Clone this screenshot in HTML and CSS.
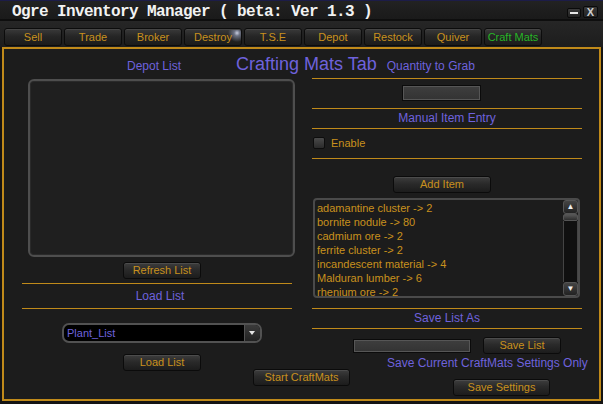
FILE: index.html
```html
<!DOCTYPE html>
<html lang="en">
<head>
  <meta charset="UTF-8" />
  <title>Ogre Inventory Manager</title>
  <link rel="stylesheet" href="styles.css">
</head>
<body>

  <div class="window">
    <div class="titlebar">
      <span class="title">Ogre Inventory Manager ( beta: Ver 1.3 )</span>
      <div class="winbtns">
        <span class="wbtn min"><i></i></span>
        <span class="wbtn close">X</span>
      </div>
    </div>

    <div class="tabs">
      <span class="tab">Sell</span>
      <span class="tab">Trade</span>
      <span class="tab">Broker</span>
      <span class="tab hover">Destroy</span>
      <span class="tab">T.S.E</span>
      <span class="tab">Depot</span>
      <span class="tab">Restock</span>
      <span class="tab">Quiver</span>
      <span class="tab active">Craft Mats</span>
    </div>

    <div class="panel">
      <div class="head">
        <span class="label depot-label">Depot List</span>
        <span class="big-title">Crafting Mats Tab</span>
        <span class="label qty-label">Quantity to Grab</span>
      </div>

      <div class="cols">
        <div class="col">
          <div class="listbox"></div>
          <button class="btn refresh">Refresh List</button>
          <div class="rule"></div>
          <div class="label section">Load List</div>
          <div class="rule"></div>
          <div class="dropdown">
            <span class="dd-text">Plant_List</span>
            <span class="dd-arrow"></span>
          </div>
          <button class="btn load">Load List</button>
          <button class="btn start">Start CraftMats</button>
        </div>

        <div class="col">
          <div class="rule first"></div>
          <div class="field qty"></div>
          <div class="rule"></div>
          <div class="label section">Manual Item Entry</div>
          <div class="rule"></div>
          <label class="check-row"><span class="checkbox"></span>Enable</label>
          <div class="rule"></div>
          <button class="btn add">Add Item</button>
          <div class="itemlist">
            <div class="items">
              <div>adamantine cluster -&gt; 2</div>
              <div>bornite nodule -&gt; 80</div>
              <div>cadmium ore -&gt; 2</div>
              <div>ferrite cluster -&gt; 2</div>
              <div>incandescent material -&gt; 4</div>
              <div>Malduran lumber -&gt; 6</div>
              <div>rhenium ore -&gt; 2</div>
            </div>
            <div class="scrollbar">
              <span class="sb-btn">&#9650;</span>
              <span class="sb-thumb"></span>
              <span class="sb-track"></span>
              <span class="sb-btn">&#9660;</span>
            </div>
          </div>
          <div class="rule gap"></div>
          <div class="label section">Save List As</div>
          <div class="rule"></div>
          <div class="save-row">
            <div class="field savename"></div>
            <button class="btn savelist">Save List</button>
          </div>
          <div class="label save-note">Save Current CraftMats Settings Only</div>
          <button class="btn savesettings">Save Settings</button>
        </div>
      </div>
    </div>
  </div>

</body>
</html>
```

FILE: styles.css
```css
body {
  margin: 0;
  background-color: #000;
  font-family: 'Liberation Sans', Arial, sans-serif;
}

.window {
  width: 603px;
  height: 404px;
  background-color: #141414;
  border-top: 1px solid #1c1c48;
  box-sizing: border-box;
  overflow: hidden;
}

/* title bar */
.titlebar {
  display: flex;
  height: 20px;
  box-sizing: border-box;
  padding: 2px 5px 0 12px;
  background: linear-gradient(#222, #1a1a1a);
  border-bottom: 2px solid #0e0e0e;
}

.title {
  font-family: 'Liberation Mono', 'Courier New', monospace;
  font-weight: bold;
  font-size: 16px;
  letter-spacing: -0.6px;
  line-height: 18px;
  color: #f2f2f2;
  white-space: nowrap;
}

.winbtns {
  display: flex;
  align-items: flex-end;
  gap: 2px;
  margin-left: auto;
  margin-top: 3px;
  height: 12px;
}

.wbtn {
  display: flex;
  align-items: center;
  justify-content: center;
  background: linear-gradient(#3a3a3a, #222);
  border: 1px solid #0a0a0a;
  border-radius: 2px;
  box-sizing: border-box;
}

.wbtn.min {
  width: 14px;
  height: 10px;
}

.wbtn.min i {
  width: 8px;
  height: 2px;
  background: #e8e8e8;
}

.wbtn.close {
  width: 15px;
  height: 12px;
  font-size: 11px;
  font-weight: bold;
  color: #cfcfcf;
}

/* tabs */
.tabs {
  display: flex;
  gap: 2px;
  height: 26px;
  box-sizing: border-box;
  padding: 7px 0 0 4px;
  background: linear-gradient(#262626, #1d1d1d);
}

.tab {
  width: 58px;
  height: 18px;
  box-sizing: border-box;
  padding-top: 1px;
  border: 1px solid #0c0c0c;
  border-radius: 3px;
  background: linear-gradient(#3a3a3a, #262626 45%, #1b1b1b);
  box-shadow: inset 0 1px 0 #454545;
  color: #c9911d;
  font-size: 11px;
  line-height: 15px;
  text-align: center;
}

.tab.hover {
  background: radial-gradient(circle at 52px 4px, #c8cde0 0, #6a6f80 3px, transparent 9px),
              linear-gradient(#3a3a3a, #262626 45%, #1b1b1b);
}

.tab.active {
  color: #27b527;
}

/* main panel */
.panel {
  width: 599px;
  height: 354px;
  margin-left: 2px;
  box-sizing: border-box;
  padding: 4px 0 0 18px;
  border: 2px solid #c08a1a;
  background-color: #1c1c1c;
}

.label {
  color: #6e62dc;
  font-size: 12px;
}

.head {
  display: flex;
  align-items: baseline;
  height: 22px;
  line-height: 22px;
}

.depot-label {
  margin-left: 105px;
}

.big-title {
  margin-left: 55px;
  color: #6e62dc;
  font-size: 18px;
}

.qty-label {
  margin-left: 10px;
}

.cols {
  display: grid;
  grid-template-columns: 270px 270px;
  column-gap: 20px;
}

.col {
  display: flex;
  flex-direction: column;
  align-items: flex-start;
}

.rule {
  align-self: stretch;
  height: 1px;
  background-color: #c08a1a;
}

.rule.first {
  margin-top: 3px;
}

.rule.gap {
  margin-top: 10px;
}

.section {
  align-self: stretch;
  text-align: center;
  line-height: 19px;
}

.col:first-child .section {
  line-height: 24px;
  padding-left: 6px;
}

/* buttons */
.btn {
  height: 17px;
  box-sizing: border-box;
  padding: 0;
  border: 1px solid #0b0b0b;
  border-radius: 3px;
  background: linear-gradient(#3d3d3d, #2a2a2a 45%, #1c1c1c);
  box-shadow: inset 0 1px 0 #4c4c4c;
  color: #c9911d;
  font-family: 'Liberation Sans', Arial, sans-serif;
  font-size: 11px;
  line-height: 15px;
  text-align: center;
}

.refresh {
  width: 78px;
  margin: 5px 0 4px 101px;
}

.load {
  width: 78px;
  margin: 11px 0 0 101px;
}

.start {
  width: 97px;
  margin: -2px 0 0 231px;
}

.add {
  width: 98px;
  margin: 17px 0 0 81px;
}

.savelist {
  width: 78px;
  margin-left: 12px;
}

.savesettings {
  width: 97px;
  margin: 7px 0 0 141px;
}

/* depot list box */
.listbox {
  width: 267px;
  height: 178px;
  margin: 4px 0 0 6px;
  box-sizing: border-box;
  border: 2px solid #4e4e4e;
  border-radius: 6px;
  background-color: #1f1f1f;
  box-shadow: inset 0 0 0 1px #2a2a2a;
}

/* dropdown */
.dropdown {
  display: flex;
  width: 200px;
  height: 20px;
  margin: 14px 0 0 40px;
  box-sizing: border-box;
  border: 2px solid #525252;
  border-radius: 7px;
  background-color: #000;
  overflow: hidden;
}

.dd-text {
  flex: 1;
  padding-left: 3px;
  color: #6e62dc;
  font-size: 11px;
  line-height: 16px;
}

.dd-arrow {
  position: relative;
  width: 15px;
  border-left: 1px solid #525252;
  background: linear-gradient(#3b3b3b, #222);
}

.dd-arrow::after {
  content: "";
  position: absolute;
  left: 4px;
  top: 6px;
  border-left: 3px solid transparent;
  border-right: 3px solid transparent;
  border-top: 4px solid #e6e6e6;
}

/* text fields */
.field {
  box-sizing: border-box;
  border: 1px solid #0b0b0b;
  background: linear-gradient(#3e3e3e, #333);
  box-shadow: inset 0 0 0 1px #565656;
}

.qty {
  width: 79px;
  height: 16px;
  margin: 6px 0 7px 90px;
}

.savename {
  width: 118px;
  height: 14px;
  margin-left: 41px;
}

.save-row {
  display: flex;
  align-items: center;
  margin-top: 8px;
}

.save-note {
  margin: 1px 0 0 75px;
  line-height: 17px;
  white-space: nowrap;
}

/* checkbox */
.check-row {
  display: flex;
  align-items: center;
  height: 29px;
  padding-left: 1px;
  padding-bottom: 2px;
  box-sizing: border-box;
  color: #c9911d;
  font-size: 11px;
}

.checkbox {
  width: 12px;
  height: 12px;
  margin-right: 6px;
  box-sizing: border-box;
  border: 1px solid #0d0d0d;
  border-radius: 2px;
  background: linear-gradient(#4a4a4a, #2b2b2b);
}

/* craft item list */
.itemlist {
  display: flex;
  width: 267px;
  height: 100px;
  margin: 5px 0 0 1px;
  box-sizing: border-box;
  border: 2px solid #4a4a4a;
  border-radius: 4px;
  background-color: #1c1c1c;
}

.items {
  flex: 1;
  padding: 1px 0 0 2px;
  overflow: hidden;
  color: #c9911d;
  font-size: 11px;
  line-height: 14px;
  white-space: nowrap;
}

.scrollbar {
  display: flex;
  flex-direction: column;
  width: 15px;
}

.sb-btn {
  height: 14px;
  box-sizing: border-box;
  border: 1px solid #555;
  border-radius: 3px;
  background: linear-gradient(#444, #222);
  color: #eee;
  font-size: 8px;
  line-height: 12px;
  text-align: center;
}

.sb-thumb {
  height: 5px;
  border: 1px solid #555;
  border-radius: 2px;
  background: linear-gradient(#555, #2e2e2e);
}

.sb-track {
  flex: 1;
  border-left: 1px solid #444;
  border-right: 1px solid #444;
  background-color: #101010;
}
```
